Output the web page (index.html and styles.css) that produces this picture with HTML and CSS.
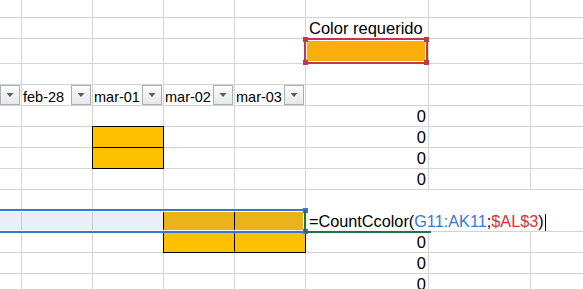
FILE: index.html
```html
<!doctype html>
<html>
    <head>
        <meta charset="utf-8" />
        <meta name="viewport" content="width=device-width, initial-scale=1" />
        <title>CountCcolor</title>
        <link rel="stylesheet" href="styles.css">
    </head>
    <body>
        <div class="sheet">
            <!-- row 1 -->
            <div></div><div></div><div></div><div></div><div></div><div></div><div></div><div></div>
            <!-- row 2 -->
            <div></div><div></div><div></div><div></div><div></div>
            <div class="txt">Color requerido</div>
            <div></div><div></div>
            <!-- row 3: the wanted colour, referenced by $AL$3 -->
            <div></div><div></div><div></div><div></div><div></div>
            <div class="wanted">
                <span class="ref red">
                    <span class="handle tl"></span>
                    <span class="handle tr"></span>
                    <span class="handle bl"></span>
                    <span class="handle br"></span>
                </span>
            </div>
            <div></div><div></div>
            <!-- row 4 -->
            <div></div><div></div><div></div><div></div><div></div><div></div><div></div><div></div>
            <!-- row 5: filter headers -->
            <div class="head"><span class="drop"></span></div>
            <div class="head"><span class="label">feb-28</span><span class="drop"></span></div>
            <div class="head"><span class="label">mar-01</span><span class="drop"></span></div>
            <div class="head"><span class="label">mar-02</span><span class="drop"></span></div>
            <div class="head"><span class="label">mar-03</span><span class="drop"></span></div>
            <div></div><div></div><div></div>
            <!-- row 6 -->
            <div></div><div></div><div></div><div></div><div></div>
            <div class="num">0</div>
            <div></div><div></div>
            <!-- row 7 -->
            <div></div><div></div><div class="fill"></div><div></div><div></div>
            <div class="num">0</div>
            <div></div><div></div>
            <!-- row 8 -->
            <div></div><div></div><div class="fill"></div><div></div><div></div>
            <div class="num">0</div>
            <div></div><div></div>
            <!-- row 9 -->
            <div></div><div></div><div></div><div></div><div></div>
            <div class="num">0</div>
            <div></div><div></div>
            <!-- row 10 -->
            <div></div><div></div><div></div><div></div><div></div>
            <!-- row 11: the row being counted -->
            <div class="sel"></div>
            <div class="sel"></div>
            <div class="sel"></div>
            <div class="fill dim"></div>
            <div class="fill dim">
                <span class="ref blue">
                    <span class="handle tr"></span>
                    <span class="handle br"></span>
                </span>
            </div>
            <!-- row 12 -->
            <div></div><div></div><div></div><div class="fill"></div><div class="fill"></div>
            <div class="num">0</div>
            <div></div><div></div>
            <!-- row 13 -->
            <div></div><div></div><div></div><div></div><div></div>
            <div class="num">0</div>
            <div></div><div></div>
            <!-- row 14 -->
            <div></div><div></div><div></div><div></div><div></div>
            <div class="num">0</div>
            <div></div><div></div>

            <!-- cell being edited, spills over the columns to its right -->
            <div class="edit">
                =CountCcolor(<span class="r1">G11:AK11</span>;<span class="r2">$AL$3</span>)<span class="caret"></span>
                <span class="active-left"></span>
                <span class="active-bottom"></span>
            </div>
        </div>
    </body>
</html>
```

FILE: styles.css
```css
html {
    font-family: "Liberation Sans", Arial, sans-serif;
    font-size: 16.5px;
    color: #000;
}

body {
    margin: 0;
    overflow: hidden;
    background: #fff;
}

.sheet {
    display: grid;
    grid-template-columns: 22px 71px 71px 71px 71px 123px 102px 80px;
    grid-template-rows: 18px 21px 25px repeat(11, 21px);
}

.sheet > div {
    display: flex;
    align-items: flex-end;
    min-width: 0;
    white-space: nowrap;
    border-right: 1px solid #d4d4d4;
    border-bottom: 1px solid #d4d4d4;
}

.txt {
    padding-left: 3px;
}

.num {
    justify-content: flex-end;
    padding-right: 2px;
}

/* filter header row */
.head {
    font-size: 14.5px;
}

.head .label {
    flex: 1 1 auto;
    min-width: 0;
    overflow: hidden;
    padding-left: 1px;
}

.drop {
    flex: none;
    margin-left: auto;
    margin-right: 1px;
    width: 20px;
    height: 20px;
    box-sizing: border-box;
    border: 1px solid #abafb4;
    background: linear-gradient(#fdfdfd, #e5e7ea);
    display: flex;
    align-items: center;
    justify-content: center;
}

.drop::before {
    content: "";
    width: 7px;
    height: 4px;
    background: #5a5a5a;
    clip-path: polygon(0 0, 100% 0, 50% 100%);
}

/* coloured cells with a thin black frame */
.fill {
    position: relative;
    background: #ffc000;
}

.fill::after {
    content: "";
    position: absolute;
    inset: -1px;
    border: 1px solid #000;
}

.fill.dim {
    background: #eab31a;
}

.sel {
    background: #e9eef8;
    border-right-color: #c6cbd4 !important;
}

.wanted {
    position: relative;
    background: #f9ae0b;
}

/* formula reference frames */
.ref {
    position: absolute;
    border: 2px solid;
    box-shadow: inset 0 0 0 1px #fff;
    z-index: 1;
}

.ref.red {
    border-color: #c6383f;
    left: -2px;
    right: 0;
    top: -1px;
    bottom: -1px;
}

.ref.blue {
    border-color: #3a74cc;
    left: -240px;
    right: -1px;
    top: -2px;
    bottom: -2px;
}

.handle {
    position: absolute;
    width: 5px;
    height: 5px;
}

.red .handle {
    background: #c6383f;
}

.blue .handle {
    background: #3a74cc;
}

.red .tl { left: -3px; top: -3px; }
.red .tr { right: -3px; top: -3px; }
.red .bl { left: -3px; bottom: -3px; }
.red .br { right: -3px; bottom: -3px; }

.blue .tr { right: -4px; top: -3px; }
.blue .br { right: -4px; bottom: -3px; }

/* in-cell editor */
.edit {
    grid-column: 6 / 9;
    grid-row: 10 / 12;
    position: relative;
    background: #fff;
    padding-left: 3px;
    font-size: 16.25px;
}

.r1 {
    color: #3b78d0;
}

.r2 {
    color: #d2333d;
}

.caret {
    display: inline-block;
    width: 1px;
    height: 17px;
    margin-left: 1px;
    background: #000;
    vertical-align: -3px;
}

.active-left {
    position: absolute;
    left: -2px;
    top: 20px;
    width: 2px;
    height: 22px;
    background: #217346;
    z-index: 2;
}

.active-bottom {
    position: absolute;
    left: -1px;
    bottom: -2px;
    width: 126px;
    height: 2px;
    background: #217346;
    z-index: 1;
}
```
